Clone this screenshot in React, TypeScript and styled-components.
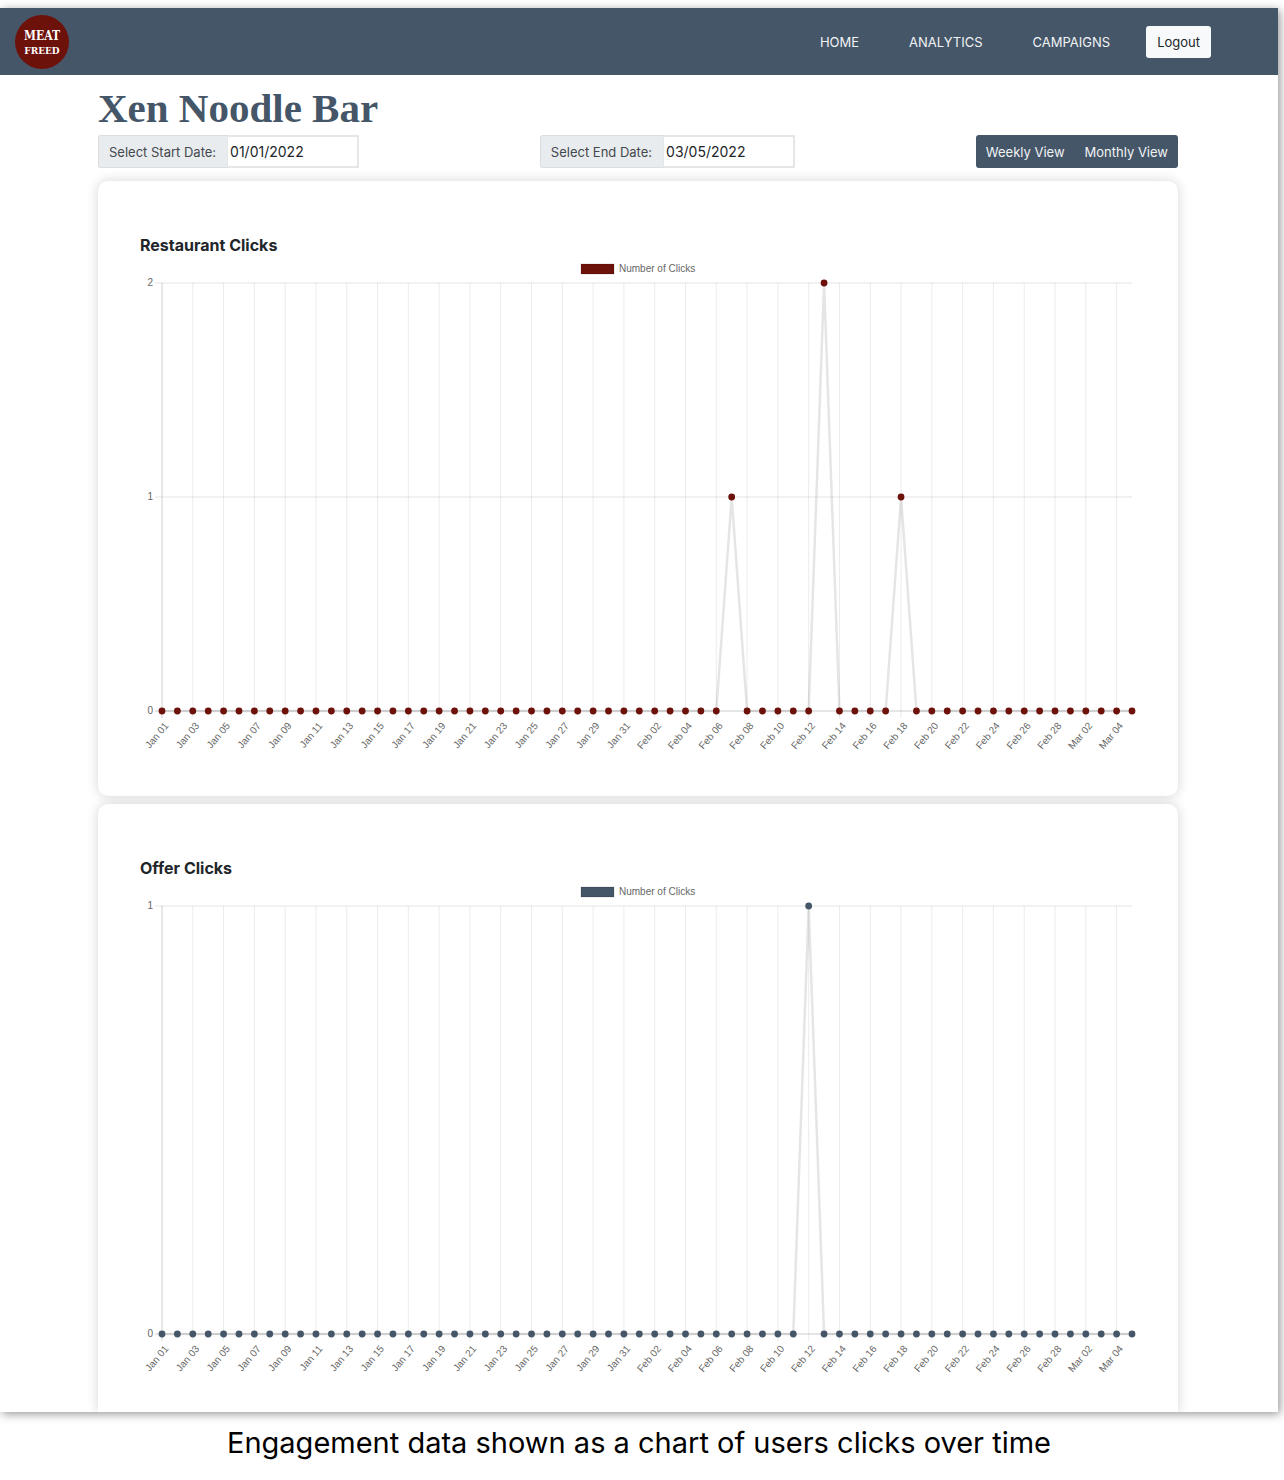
import React from "react";
import styled, { createGlobalStyle } from "styled-components";

const slate = "#455668";
const maroon = "#6d110b";

const GlobalStyle = createGlobalStyle`
  *, *::before, *::after { box-sizing: border-box; }
  body {
    margin: 0;
    background: #fff;
    color: #212529;
    font-family: Inter, "Liberation Sans", sans-serif;
    font-size: 13px;
    line-height: 20px;
  }
  h1, h2, p, figure { margin: 0; }
  button, input { font: inherit; color: inherit; }
`;

const Figure = styled.figure`
  padding: 8px 6px 0 0;
`;

const Screen = styled.div`
  overflow: hidden;
  background: #fff;
`;

const ScreenShadow = styled.div`
  box-shadow: 2px 2px 9px rgba(0, 0, 0, 0.42);
`;

const Header = styled.header`
  display: flex;
  align-items: center;
  justify-content: space-between;
  height: 67px;
  padding: 0 67px 0 15px;
  background: ${slate};
`;

const LogoLink = styled.a`
  display: block;
  height: 54px;
`;

const Nav = styled.nav`
  display: flex;
  align-items: center;
`;

const NavLink = styled.a`
  padding: 6px 25px;
  color: #f1f3f5;
  text-decoration: none;
`;

const LogoutButton = styled.button`
  height: 32px;
  margin-left: 11px;
  padding: 0 11px;
  border: 0;
  border-radius: 3px;
  background: #f8f9fa;
  color: #212529;
`;

const Main = styled.main`
  padding: 12px 100px 0 98px;
`;

const PageTitle = styled.h1`
  margin-bottom: 6px;
  color: ${slate};
  font-family: "Liberation Serif", serif;
  font-size: 41px;
  line-height: 42px;
`;

const Toolbar = styled.div`
  display: flex;
  justify-content: space-between;
  margin-bottom: 13px;
`;

const DateGroup = styled.div`
  display: flex;
  height: 33px;
`;

const DateLabel = styled.label`
  display: flex;
  align-items: center;
  padding: 0 11px 0 10px;
  border: 1px solid #dadee1;
  border-right: 0;
  border-radius: 3px 0 0 3px;
  background: #e9ecef;
  color: #43484d;
`;

const DateInput = styled.input`
  width: 132px;
  padding: 0 2px;
  border: 2px solid #e6e6e6;
  border-left-width: 1px;
  border-radius: 0;
  background: #fff;
  font-size: 14px;
`;

const ViewGroup = styled.div`
  display: flex;
  height: 33px;
  overflow: hidden;
  border-radius: 3px;
  background: ${slate};
`;

const ViewButton = styled.button`
  padding: 0 10px;
  border: 0;
  background: transparent;
  color: #f1f3f5;
`;

const Cards = styled.div`
  display: grid;
  gap: 8px;
`;

const Card = styled.section<{ $cut?: boolean }>`
  padding: ${(p) => (p.$cut ? "52px 42px 33px" : "52px 42px 40px")};
  border-radius: ${(p) => (p.$cut ? "10px 10px 0 0" : "10px")};
  background: #fff;
  box-shadow: 0 0 12px rgba(60, 40, 40, 0.2);
`;

const CardTitle = styled.h2`
  font-size: 16px;
  font-weight: 700;
  line-height: 25px;
`;

const ChartSvg = styled.svg`
  display: block;
  width: 100%;
  height: auto;
  font-family: "Liberation Sans", Arial, sans-serif;
  font-size: 10px;
`;

const Caption = styled.figcaption`
  padding: 14px 16px;
  color: #000;
  font-size: 29px;
  line-height: 34px;
  text-align: center;
`;

const LogoText = styled.text`
  fill: #fff;
  font-family: "DejaVu Serif Condensed", "DejaVu Serif", serif;
  font-weight: 700;
  text-anchor: middle;
`;

function Logo() {
  return (
    <svg width="54" height="54" viewBox="0 0 54 54" role="img" aria-label="Meat Freed">
      <circle cx="27" cy="27" r="27" fill={maroon} />
      <LogoText x="27" y="25" fontSize="12">MEAT</LogoText>
      <LogoText x="27" y="39" fontSize="10">FREED</LogoText>
    </svg>
  );
}

const months: [string, number][] = [["Jan", 31], ["Feb", 28], ["Mar", 5]];
const days = months.flatMap(([name, count]) =>
  Array.from({ length: count }, (_, i) => `${name} ${String(i + 1).padStart(2, "0")}`)
);

type ChartProps = {
  title: string;
  color: string;
  max: number;
  clicks: Record<string, number>;
};

const left = 22;
const right = 992;
const top = 25;
const bottom = 453;

function ClicksChart({ title, color, max, clicks }: ChartProps) {
  const x = (i: number) => left + (i * (right - left)) / (days.length - 1);
  const y = (v: number) => bottom - (v * (bottom - top)) / max;
  const points = days.map((d, i) => ({ x: x(i), y: y(clicks[d] ?? 0) }));
  const ticks = Array.from({ length: max + 1 }, (_, i) => i);

  return (
    <ChartSvg viewBox="0 0 996 498" role="img" aria-label={title}>
      <rect x="441" y="6" width="33" height="10" fill={color} stroke="#000" strokeOpacity="0.15" />
      <text x="479" y="14" fill="#666">Number of Clicks</text>
      {ticks.map((v) => (
        <g key={v}>
          <line x1={left - 7} x2={right} y1={y(v)} y2={y(v)} stroke="#000" strokeOpacity={v ? 0.1 : 0.2} />
          <text x="13" y={y(v) + 3} textAnchor="end" fill="#666">{v}</text>
        </g>
      ))}
      {days.map((d, i) =>
        i % 2 === 0 && i < days.length - 1 ? (
          <g key={d}>
            <line x1={x(i)} x2={x(i)} y1={top} y2={bottom + 7} stroke="#000" strokeOpacity={i ? 0.08 : 0.18} />
            <text
              transform={`translate(${x(i) + 7} ${bottom + 15}) rotate(-50)`}
              textAnchor="end"
              fill="#666"
            >
              {d}
            </text>
          </g>
        ) : null
      )}
      <polyline
        points={points.map((p) => `${p.x},${p.y}`).join(" ")}
        fill="none"
        stroke="#000"
        strokeOpacity="0.1"
        strokeWidth="2.5"
        strokeLinejoin="bevel"
      />
      {points.map((p, i) => (
        <circle key={days[i]} cx={p.x} cy={p.y} r="3.4" fill={color} />
      ))}
    </ChartSvg>
  );
}

export default function App() {
  return (
    <>
      <GlobalStyle />
      <Figure>
        <ScreenShadow>
          <Screen>
            <Header>
              <LogoLink href="#home"><Logo /></LogoLink>
              <Nav>
                <NavLink href="#home">HOME</NavLink>
                <NavLink href="#analytics">ANALYTICS</NavLink>
                <NavLink href="#campaigns">CAMPAIGNS</NavLink>
                <LogoutButton type="button">Logout</LogoutButton>
              </Nav>
            </Header>
            <Main>
              <PageTitle>Xen Noodle Bar</PageTitle>
              <Toolbar>
                <DateGroup>
                  <DateLabel htmlFor="start-date">Select Start Date:</DateLabel>
                  <DateInput id="start-date" type="text" defaultValue="01/01/2022" />
                </DateGroup>
                <DateGroup>
                  <DateLabel htmlFor="end-date">Select End Date:</DateLabel>
                  <DateInput id="end-date" type="text" defaultValue="03/05/2022" />
                </DateGroup>
                <ViewGroup>
                  <ViewButton type="button">Weekly View</ViewButton>
                  <ViewButton type="button">Monthly View</ViewButton>
                </ViewGroup>
              </Toolbar>
              <Cards>
                <Card>
                  <CardTitle>Restaurant Clicks</CardTitle>
                  <ClicksChart
                    title="Restaurant Clicks"
                    color={maroon}
                    max={2}
                    clicks={{ "Feb 07": 1, "Feb 13": 2, "Feb 18": 1 }}
                  />
                </Card>
                <Card $cut>
                  <CardTitle>Offer Clicks</CardTitle>
                  <ClicksChart title="Offer Clicks" color={slate} max={1} clicks={{ "Feb 12": 1 }} />
                </Card>
              </Cards>
            </Main>
          </Screen>
        </ScreenShadow>
        <Caption>Engagement data shown as a chart of users clicks over time</Caption>
      </Figure>
    </>
  );
}
